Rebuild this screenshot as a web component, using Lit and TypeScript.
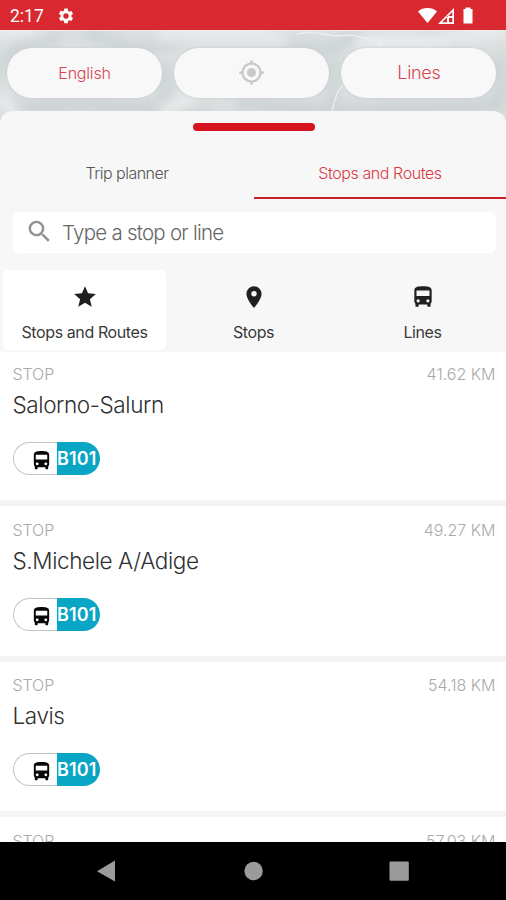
import { LitElement, html, svg, css } from "lit";
import { customElement, property } from "lit/decorators.js";

const paths: Record<string, string> = {
  gear: "M19.14 12.94c.04-.3.06-.61.06-.94s-.02-.64-.07-.94l2.03-1.58a.49.49 0 0 0 .12-.61l-1.92-3.32a.49.49 0 0 0-.59-.22l-2.39.96a7 7 0 0 0-1.62-.94l-.36-2.54A.48.48 0 0 0 13.92 2h-3.84a.48.48 0 0 0-.47.41l-.36 2.54c-.59.24-1.13.57-1.62.94l-2.39-.96a.48.48 0 0 0-.59.22L2.74 8.87a.48.48 0 0 0 .12.61l2.03 1.58c-.05.3-.09.63-.09.94s.02.64.07.94l-2.03 1.58a.49.49 0 0 0-.12.61l1.92 3.32c.12.22.37.29.59.22l2.39-.96c.5.38 1.03.7 1.62.94l.36 2.54c.05.24.24.41.48.41h3.84c.24 0 .44-.17.47-.41l.36-2.54a7 7 0 0 0 1.62-.94l2.39.96c.22.08.47 0 .59-.22l1.92-3.32a.48.48 0 0 0-.12-.61zM12 15.6A3.6 3.6 0 1 1 12 8.4a3.6 3.6 0 0 1 0 7.2z",
  locate: "M12 8a4 4 0 1 0 0 8 4 4 0 0 0 0-8zm8.94 3A8.99 8.99 0 0 0 13 3.06V1h-2v2.06A8.99 8.99 0 0 0 3.06 11H1v2h2.06A8.99 8.99 0 0 0 11 20.94V23h2v-2.06A8.99 8.99 0 0 0 20.94 13H23v-2h-2.06zM12 19a7 7 0 1 1 0-14 7 7 0 0 1 0 14z",
  search: "M15.5 14h-.79l-.28-.27A6.47 6.47 0 0 0 16 9.5 6.5 6.5 0 1 0 9.5 16c1.61 0 3.09-.59 4.23-1.57l.27.28v.79l5 4.99L20.49 19l-4.99-5zm-6 0a4.5 4.5 0 1 1 0-9 4.5 4.5 0 0 1 0 9z",
  star: "M12 17.27 18.18 21l-1.64-7.03L22 9.24l-7.19-.61L12 2 9.19 8.63 2 9.24l5.46 4.73L5.82 21z",
  pin: "M12 2a7 7 0 0 0-7 7c0 5.25 7 13 7 13s7-7.75 7-13a7 7 0 0 0-7-7zm0 9.5a2.5 2.5 0 1 1 0-5 2.5 2.5 0 0 1 0 5z",
  bus: "M4 16c0 .88.39 1.67 1 2.22V20c0 .55.45 1 1 1h1c.55 0 1-.45 1-1v-1h8v1c0 .55.45 1 1 1h1c.55 0 1-.45 1-1v-1.78c.61-.55 1-1.34 1-2.22V6c0-3.5-3.58-4-8-4s-8 .5-8 4v10zm3.5 1a1.5 1.5 0 1 1 0-3 1.5 1.5 0 0 1 0 3zm9 0a1.5 1.5 0 1 1 0-3 1.5 1.5 0 0 1 0 3zm1.5-6H6V6h12v5z",
};

@customElement("app-icon")
class AppIcon extends LitElement {
  @property() name = "";
  static styles = css`
    :host { display: block; flex: none; }
    svg { display: block; width: 100%; height: 100%; fill: currentColor; }
  `;
  render() {
    return html`<svg viewBox="0 0 24 24">${svg`<path fill-rule="evenodd" d=${paths[this.name] ?? ""}></path>`}</svg>`;
  }
}

@customElement("stop-row")
class StopRow extends LitElement {
  @property() name = "";
  @property() distance = "";
  static styles = css`
    :host { display: block; flex: none; box-sizing: border-box; height: 155.6px; padding: 13.5px 10.5px 0 12.5px; background: #fff; border-bottom: 6px solid #f4f4f4; }
    .meta { display: flex; justify-content: space-between; height: 21px; line-height: 21px; font-size: 16px; font-weight: 300; color: #a9a9a9; }
    .kind { letter-spacing: -0.1px; }
    .name { height: 30px; line-height: 30px; margin-top: 5px; font-size: 22.5px; font-weight: 300; letter-spacing: -0.4px; color: #303030; white-space: nowrap; }
    .badge { display: flex; width: 87px; height: 33px; margin-top: 22px; }
    .mode { width: 44.5px; box-sizing: border-box; padding: 6px 0 0 16px; border: 1px solid #c4c4c4; border-right: 0; border-radius: 17px 0 0 17px; color: #080808; }
    .mode app-icon { width: 23px; height: 23px; }
    .line { flex: 1; border-radius: 0 17px 17px 0; background: #08a5c5; line-height: 34px; font-size: 18px; font-weight: 600; letter-spacing: 0.1px; color: #fff; white-space: nowrap; }
  `;
  render() {
    return html`
      <div class="meta"><span class="kind">STOP</span><span class="dist">${this.distance} KM</span></div>
      <div class="name">${this.name}</div>
      <div class="badge"><div class="mode"><app-icon name="bus"></app-icon></div><div class="line">B101</div></div>
    `;
  }
}

@customElement("app-root")
class AppRoot extends LitElement {
  static styles = css`
    :host { display: flex; flex-direction: column; width: 506px; height: 900px; overflow: hidden; font-family: Inter, "Liberation Sans", sans-serif; background: #fff; }
    .status { display: flex; align-items: center; flex: none; height: 30px; box-sizing: border-box; padding: 2px 32px 0 10px; background: #d9282f; color: #fff; }
    .clock { width: 47px; font: 400 17.5px/28px Roboto, sans-serif; }
    .status app-icon { width: 18px; height: 18px; }
    .signals { margin-left: auto; width: 56px; height: 20px; }
    .map { position: relative; flex: none; height: 91px; overflow: hidden; background: #dbdfe0; }
    .terrain { position: absolute; inset: 0; width: 506px; height: 91px; }
    .pills { position: relative; display: grid; grid-template-columns: 155px 155px 155px; gap: 12.2px; padding: 18px 7px; }
    .pill { display: flex; align-items: center; justify-content: center; height: 49.5px; border-radius: 25px; background: #f8f8f8; box-shadow: 0 0 3px #c6cacb; color: #d94450; font-size: 16px; font-weight: 300; }
    .en { font-size: 16px; letter-spacing: -0.2px; }
    .ln { font-size: 18px; letter-spacing: -0.3px; }
    .pill app-icon { width: 27px; height: 27px; color: #c8c8c8; }
    .sheet { position: relative; z-index: 1; flex: none; height: 241px; margin-top: -10px; border-radius: 13px 13px 0 0; background: #f7f7f7; }
    .handle { width: 122px; height: 8px; margin: 0 auto; border-radius: 4px; background: #d4141e; }
    .grip { padding: 12px 0 0 2px; height: 8px; }
    .tabs { display: grid; grid-template-columns: 254px 252px; height: 68.5px; box-sizing: border-box; }
    .tab { height: 68px; box-sizing: border-box; padding-top: 31px; text-align: center; line-height: 22px; font-size: 16px; font-weight: 300; letter-spacing: -0.5px; color: #555; }
    .tab.on { color: #d93a45; letter-spacing: -0.42px; border-bottom: 2px solid #c91f24; }
    .search { display: flex; align-items: center; height: 41px; margin: 12.5px 10px 0 13px; border-radius: 6px; background: #fff; color: #666; font-size: 20.5px; font-weight: 300; letter-spacing: -0.75px; }
    .search app-icon { width: 29px; height: 29px; margin: -3px 8px 0 12px; color: #929292; }
    .filters { display: grid; grid-template-columns: 163px 163px 163px; gap: 6px; margin: 17px 2px 0 3px; }
    .filter { display: flex; flex-direction: column; align-items: center; height: 80px; box-sizing: border-box; padding-top: 14px; border-radius: 5px; color: #3a3a3a; font-size: 16px; font-weight: 400; letter-spacing: -0.4px; line-height: 22px; }
    .filter.on { background: #fff; }
    .filter app-icon { width: 26px; height: 26px; margin-bottom: 11px; color: #202020; }
    .list { flex: 1; min-height: 0; margin-top: -1.5px; overflow: hidden; display: flex; flex-direction: column; }
    .nav { flex: none; height: 58px; background: #000; }
    .nav svg { display: block; }
  `;

  render() {
    return html`
      <div class="status">
        <span class="clock">2:17</span>
        <app-icon name="gear"></app-icon>
        <svg class="signals" viewBox="0 0 56 20" fill="#fff">
          <path d="M0 5.5C4.5.9 14.5.9 19 5.5L9.5 17z"></path>
          <path fill-rule="evenodd" d="M36 2v16H20zM34.3 6.1 24 16.3h5V10h5.3zM31 12v4.3h3.3V12z"></path>
          <path d="M45.5 3h2V1.5h5V3h2v14.5h-9z"></path>
        </svg>
      </div>
      <div class="map">
        <svg class="terrain" viewBox="0 0 506 91" preserveAspectRatio="none">
          <defs><filter id="soft" x="-20%" y="-50%" width="140%" height="200%"><feGaussianBlur stdDeviation="6"></feGaussianBlur></filter></defs>
          <g filter="url(#soft)" fill="none" stroke-linecap="round">
            <path d="M-5 42 18 18 55 8M88 3l48 18 52-14M275 16l55 4 28-16M428 5l30 12M165 40v30M333 35v45M500 30v40" stroke="#cdd3d5" stroke-width="13"></path>
            <path d="M-5 78 80 75l75 3 55 8M240 74l90 7 170-6" stroke="#cad0d2" stroke-width="12"></path>
            <path d="M0 2 38 0M160 5l95-2 26 7M360 12l80-1 65-12M0 70l15 14M165 80l25-9" stroke="#ecefef" stroke-width="11"></path>
          </g>
          <path d="M297 4l12-2 14 2 12 2 17-1 12 3 15 2 4 4-4 2M343 56l-5 5-4 12-2 10" fill="none" stroke="#ebeeee" stroke-width="1.3"></path>
          <path d="M0 .5h506" stroke="#f6e9e9"></path>
        </svg>
        <div class="pills">
          <div class="pill en">English</div>
          <div class="pill"><app-icon name="locate"></app-icon></div>
          <div class="pill ln">Lines</div>
        </div>
      </div>
      <div class="sheet">
        <div class="grip"><div class="handle"></div></div>
        <div class="tabs"><div class="tab">Trip planner</div><div class="tab on">Stops and Routes</div></div>
        <div class="search"><app-icon name="search"></app-icon><span>Type a stop or line</span></div>
        <div class="filters">
          <div class="filter on"><app-icon name="star"></app-icon>Stops and Routes</div>
          <div class="filter"><app-icon name="pin"></app-icon>Stops</div>
          <div class="filter"><app-icon name="bus"></app-icon>Lines</div>
        </div>
      </div>
      <div class="list">
        <stop-row name="Salorno-Salurn" distance="41.62"></stop-row>
        <stop-row name="S.Michele A/Adige" distance="49.27"></stop-row>
        <stop-row name="Lavis" distance="54.18"></stop-row>
        <stop-row distance="57.03"></stop-row>
      </div>
      <div class="nav">
        <svg width="506" height="58" viewBox="0 0 506 58" fill="#9b9b9b">
          <path d="M97 29.2 115 18.5v21z"></path>
          <circle cx="253.6" cy="29" r="9.2"></circle>
          <rect x="389.5" y="19.5" width="19.3" height="19.3" rx="1"></rect>
        </svg>
      </div>
    `;
  }
}
